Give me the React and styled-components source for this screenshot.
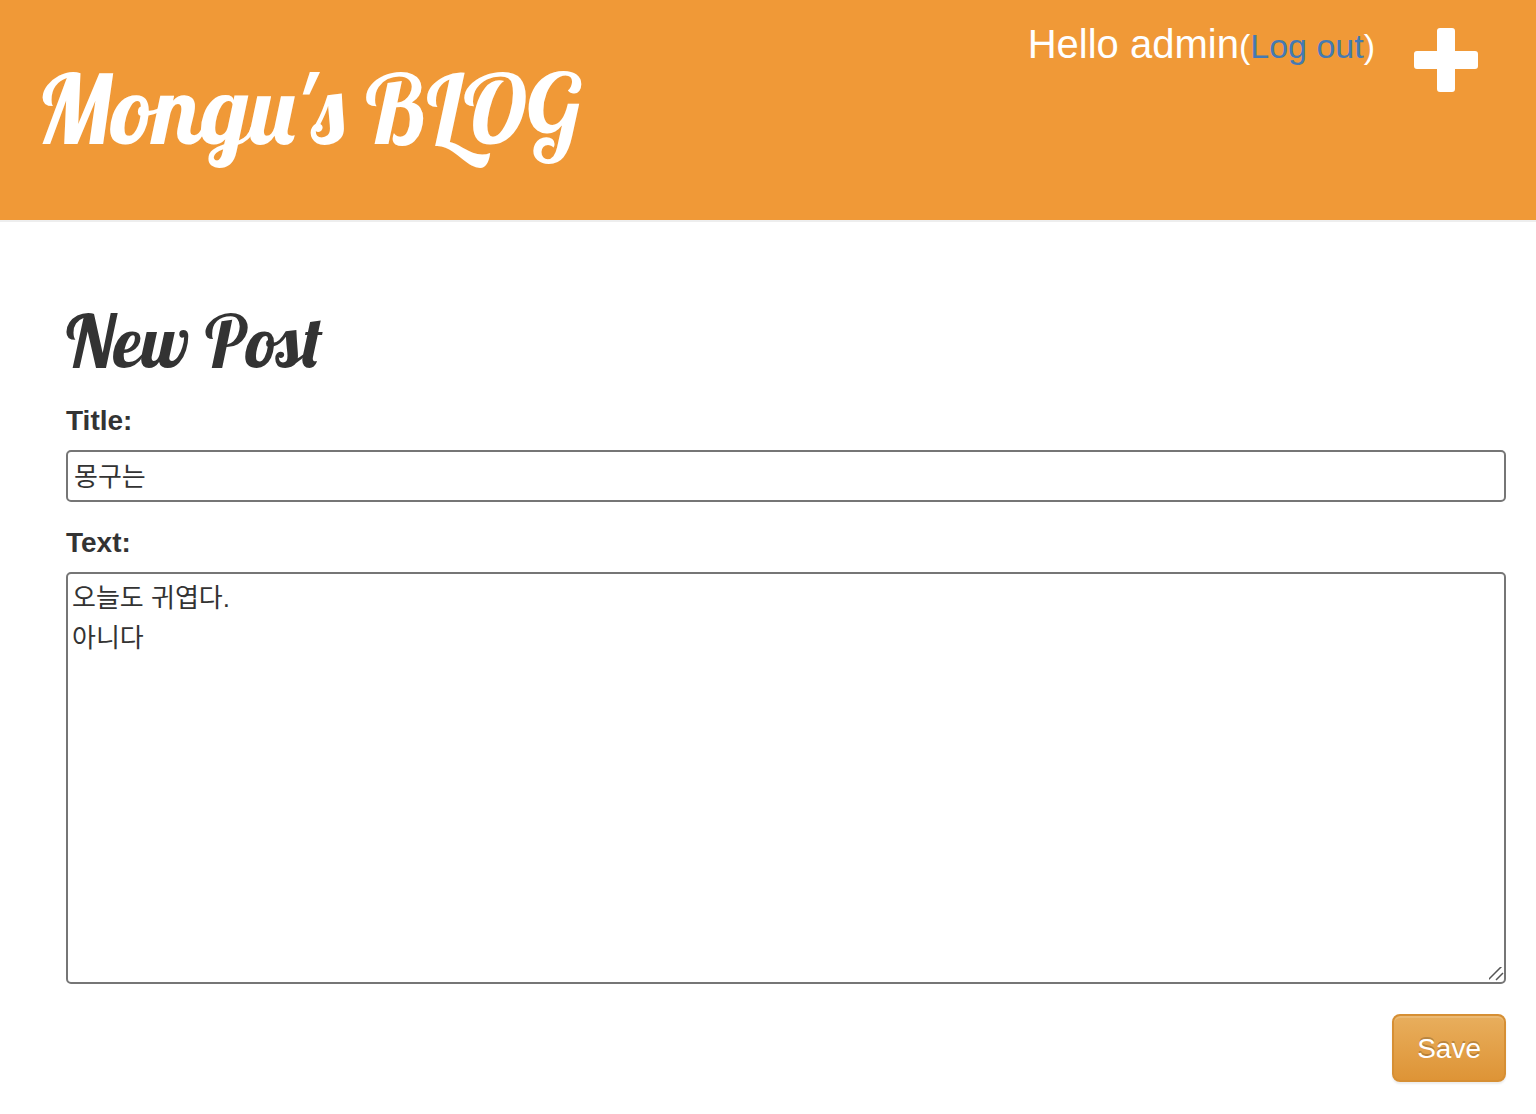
import React from 'react';
import styled, { createGlobalStyle } from 'styled-components';

const GlobalStyle = createGlobalStyle`
  * {
    box-sizing: border-box;
  }
  body {
    margin: 0;
    background: #fff;
    color: #333;
    font-family: 'Liberation Sans', 'Noto Sans CJK KR', sans-serif;
    font-size: 28px;
    line-height: 40px;
  }
`;

const Header = styled.header`
  display: flex;
  justify-content: space-between;
  align-items: flex-start;
  padding: 0 57px 52px 36px;
  background: #f09937;
  border-bottom: 2px solid #eee;
  color: #fff;
`;

const Logo = styled.h1`
  margin: 48px 0 0;
  font-family: Lobster, 'Liberation Serif', serif;
  font-size: 96px;
  font-weight: normal;
  line-height: 120px;
  white-space: nowrap;
  a {
    color: #fff;
    text-decoration: none;
  }
`;

const UserMenu = styled.div`
  display: flex;
  align-items: flex-start;
  gap: 38px;
  padding-top: 20px;
`;

const Greeting = styled.p`
  margin: 0;
  font-size: 40px;
  line-height: 48px;
  white-space: nowrap;
  small {
    font-size: 34px;
  }
  a {
    color: #447ab3;
    text-decoration: none;
  }
`;

const AddLink = styled.a`
  display: flex;
  padding-top: 6px;
  color: #fff;
`;

const Content = styled.main`
  padding: 80px 30px 32px 66px;
`;

const Heading = styled.h2`
  margin: 0 0 20px;
  font-family: Lobster, 'Liberation Serif', serif;
  font-size: 72px;
  font-weight: normal;
  line-height: 78px;
`;

const Field = styled.div`
  display: flex;
  flex-direction: column;
  margin-bottom: 20px;
`;

const Label = styled.label`
  margin-bottom: 8px;
  font-weight: bold;
  line-height: 42px;
`;

const TextInput = styled.input`
  width: 100%;
  height: 52px;
  padding: 0 6px 4px;
  border: 2px solid #767676;
  border-radius: 5px;
  background: #fff;
  color: #333;
  font: inherit;
  font-size: 26px;
`;

const TextArea = styled.textarea`
  width: 100%;
  height: 412px;
  padding: 4px;
  border: 2px solid #767676;
  border-radius: 5px;
  background: #fff;
  color: #333;
  font: inherit;
  font-size: 26px;
  resize: vertical;
  &::-webkit-scrollbar {
    width: 18px;
  }
  &::-webkit-resizer {
    background: url("data:image/svg+xml,%3Csvg xmlns='http://www.w3.org/2000/svg' width='18' height='18'%3E%3Cpath d='M2 16L17 1M10 16L17 9' stroke='%23555' stroke-width='1.5'/%3E%3C/svg%3E") right bottom no-repeat;
  }
`;

const Actions = styled.div`
  display: flex;
  justify-content: flex-end;
  padding-top: 10px;
`;

const SaveButton = styled.button`
  height: 68px;
  padding: 2px 23px 0;
  border: 2px solid #d68f34;
  border-radius: 8px;
  background: linear-gradient(#e8ae5d, #de9436);
  box-shadow: inset 0 2px 0 rgba(255, 255, 255, 0.15), 0 2px 2px rgba(0, 0, 0, 0.08);
  color: #fff;
  font: inherit;
  text-shadow: 0 -2px 0 rgba(0, 0, 0, 0.2);
`;

function PlusIcon () {
  return (
    <svg width="66" height="66" viewBox="0 0 66 66" fill="currentColor" aria-hidden="true">
      <path d="M27 2h12q3 0 3 3v20h20q3 0 3 3v12q0 3-3 3h-20v20q0 3-3 3h-12q-3 0-3-3v-20h-20q-3 0-3-3v-12q0-3 3-3h20v-20q0-3 3-3z" />
    </svg>
  );
}

function App () {
  return (
    <>
      <GlobalStyle />
      <Header>
        <Logo><a href="/">Mongu's BLOG</a></Logo>
        <UserMenu>
          <Greeting>
            Hello admin<small>(<a href="/logout">Log out</a>)</small>
          </Greeting>
          <AddLink href="/post/new" aria-label="New post">
            <PlusIcon />
          </AddLink>
        </UserMenu>
      </Header>
      <Content>
        <Heading>New Post</Heading>
        <form onSubmit={(e) => e.preventDefault()}>
          <Field>
            <Label htmlFor="title">Title:</Label>
            <TextInput id="title" type="text" defaultValue="몽구는" />
          </Field>
          <Field>
            <Label htmlFor="text">Text:</Label>
            <TextArea id="text" defaultValue={'오늘도 귀엽다.\n아니다'} />
          </Field>
          <Actions>
            <SaveButton type="submit">Save</SaveButton>
          </Actions>
        </form>
      </Content>
    </>
  );
}

export default App;
